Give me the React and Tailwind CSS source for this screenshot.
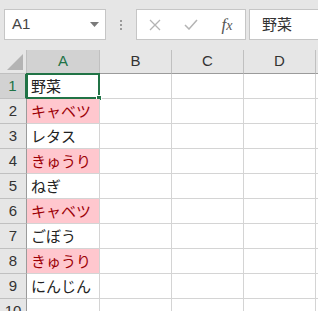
import React from "react";

const rows = [
  { text: "野菜", pink: false },
  { text: "キャベツ", pink: true },
  { text: "レタス", pink: false },
  { text: "きゅうり", pink: true },
  { text: "ねぎ", pink: false },
  { text: "キャベツ", pink: true },
  { text: "ごぼう", pink: false },
  { text: "きゅうり", pink: true },
  { text: "にんじん", pink: false },
  { text: "", pink: false },
];

const cols = ["A", "B", "C", "D"];

const font = { fontFamily: '"Noto Sans CJK JP", "Liberation Sans", sans-serif' };

export default function App() {
  return (
    <div className="w-[318px] h-[311px] overflow-hidden bg-white" style={font}>
      {/* formula bar */}
      <div className="h-[50px] bg-[#e6e6e6] flex items-start pt-[9px] pl-[4px]">
        <div className="w-[102px] h-[31px] bg-white border border-[#c6c6c6] flex items-center justify-between pl-[7px] pr-[6px]">
          <span className="text-[15px] text-[#444]" style={{ fontFamily: '"Liberation Sans", sans-serif' }}>A1</span>
          <svg width="9" height="5" viewBox="0 0 9 5">
            <path d="M0 0h9L4.5 5z" fill="#7a7a7a" />
          </svg>
        </div>
        <div className="w-[30px] h-[31px] flex flex-col items-center justify-center gap-[2px]">
          <span className="w-[2px] h-[2px] bg-[#9a9a9a]" />
          <span className="w-[2px] h-[2px] bg-[#9a9a9a]" />
          <span className="w-[2px] h-[2px] bg-[#9a9a9a]" />
        </div>
        <div className="w-[110px] h-[31px] bg-white border border-[#c6c6c6] flex items-center">
          <div className="w-[36px] flex justify-center">
            <svg width="12" height="12" viewBox="0 0 12 12">
              <path d="M1 1l10 10M11 1L1 11" stroke="#b4b4b4" strokeWidth="1.3" />
            </svg>
          </div>
          <div className="w-[36px] flex justify-center">
            <svg width="14" height="11" viewBox="0 0 14 11">
              <path d="M1 6l4 4L13 1" stroke="#b4b4b4" strokeWidth="1.5" fill="none" />
            </svg>
          </div>
          <div className="w-[36px] flex justify-center">
            <span className="italic text-[17px] text-[#555] leading-none" style={{ fontFamily: '"Liberation Serif", serif' }}>
              f<span className="text-[14px]">x</span>
            </span>
          </div>
        </div>
        <div className="ml-[3px] flex-1 h-[31px] bg-white border border-[#c6c6c6] border-r-0 flex items-center pl-[12px]">
          <span className="text-[15px] text-[#333]">野菜</span>
        </div>
      </div>

      {/* sheet */}
      <div className="grid grid-cols-[27px_73px_72px_72px_72px_1fr]">
        <div className="h-[24px] bg-[#e6e6e6] border-r border-b border-[#c0c0c0] flex items-end justify-end pr-[3px] pb-[3px]">
          <svg width="16" height="16" viewBox="0 0 16 16">
            <path d="M16 0v16H0z" fill="#b4b4b4" />
          </svg>
        </div>
        {cols.map((c, i) => (
          <div
            key={c}
            className={
              i === 0
                ? "h-[24px] bg-[#d2d2d2] border-r border-b border-b-[#9b9b9b] border-r-[#c0c0c0] flex items-center justify-center text-[15px] text-[#217346]"
                : "h-[24px] bg-[#e6e6e6] border-r border-b border-b-[#9b9b9b] border-r-[#c0c0c0] flex items-center justify-center text-[15px] text-[#333]"
            }
            style={{ fontFamily: '"Liberation Sans", sans-serif' }}
          >
            {c}
          </div>
        ))}
        <div className="h-[24px] bg-[#e6e6e6] border-b border-[#9b9b9b]" />

        {rows.map((r, i) => (
          <React.Fragment key={i}>
            <div
              className={
                i === 0
                  ? "h-[25px] bg-[#d2d2d2] border-r-2 border-r-[#217346] border-b border-b-[#c0c0c0] flex items-center justify-center text-[15px] text-[#217346]"
                  : "h-[25px] bg-[#e6e6e6] border-r border-r-[#9b9b9b] border-b border-b-[#c0c0c0] flex items-center justify-center text-[15px] text-[#333]"
              }
              style={{ fontFamily: '"Liberation Sans", sans-serif' }}
            >
              {i + 1}
            </div>
            <div
              className={
                r.pink
                  ? "relative h-[25px] bg-[#ffc7ce] border-r border-b border-[#d4d4d4] flex items-center pl-[4px] text-[15px] text-[#9c0006] whitespace-nowrap"
                  : "relative h-[25px] border-r border-b border-[#d4d4d4] flex items-center pl-[4px] text-[15px] text-[#222] whitespace-nowrap"
              }
            >
              {r.text}
              {i === 0 && (
                <div className="absolute left-[-1px] top-[-1px] w-[74px] h-[26px] border-2 border-[#217346]">
                  <div className="absolute right-[-4px] bottom-[-4px] w-[6px] h-[6px] bg-[#217346] border border-white" />
                </div>
              )}
            </div>
            <div className="h-[25px] border-r border-b border-[#d4d4d4]" />
            <div className="h-[25px] border-r border-b border-[#d4d4d4]" />
            <div className="h-[25px] border-r border-b border-[#d4d4d4]" />
            <div className="h-[25px] border-b border-[#d4d4d4]" />
          </React.Fragment>
        ))}
      </div>
    </div>
  );
}
